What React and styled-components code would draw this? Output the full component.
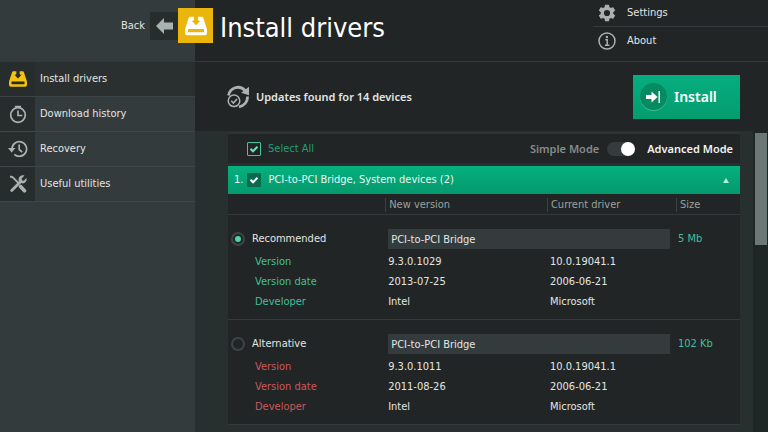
import React, { useState } from "react";
import styled, { createGlobalStyle, css } from "styled-components";

const c = {
  dark: "#212525",
  side: "#333b3d",
  cell: "#272c2c",
  active: "#2a3030",
  body: "#28302f",
  track: "#1f2626",
  line: "#323a3b",
  icon: "#aab2b0",
  text: "#e3e5e4",
  muted: "#9ba19f",
  mint: "#45bf98",
  red: "#c9595c",
  yellow: "#eab60c",
};

const ui = `"DejaVu Sans Condensed", "Noto Sans", sans-serif`;
const strong = `"Noto Sans", "Open Sans", sans-serif`;

const GlobalStyle = createGlobalStyle`
  *, *::before, *::after { box-sizing: border-box; }
  body {
    margin: 0;
    background: ${c.body};
    color: ${c.text};
    font-family: ${ui};
    font-size: 11px;
    line-height: 16px;
  }
  h1, ul, p { margin: 0; padding: 0; }
  ul { list-style: none; }
  a { color: inherit; text-decoration: none; }
  svg { display: block; flex: none; }
`;

const Page = styled.div`
  --side: 195px;
  display: flex;
  flex-direction: column;
  min-height: 100vh;
`;

const Header = styled.header`
  display: flex;
  height: 62px;
  border-bottom: 1px solid ${c.line};
  background: linear-gradient(to right, ${c.side} var(--side), ${c.dark} var(--side));
`;

const BackLink = styled.a`
  display: flex;
  justify-content: flex-end;
  align-items: center;
  gap: 5px;
  width: 178px;
  height: 52px;
`;

const ArrowBox = styled.span`
  display: grid;
  place-items: center;
  width: 28px;
  height: 28px;
  background: ${c.cell};
  color: ${c.icon};
`;

const Brand = styled.div`
  display: flex;
  align-items: center;
  gap: 7px;
  height: 51px;
`;

const LogoTile = styled.span`
  display: grid;
  place-items: center;
  width: 35px;
  height: 35px;
  background: ${c.yellow};
  color: #fff;
`;

const Title = styled.h1`
  padding-top: 4px;
  font-size: 27px;
  font-weight: 400;
  line-height: 36px;
  color: #fff;
  white-space: nowrap;
`;

const TopLinks = styled.ul`
  margin-left: auto;
  width: 175px;
`;

const TopItem = styled.li`
  & + & { padding-top: 1px; border-top: 1px solid ${c.line}; }
`;

const TopLink = styled.a`
  display: flex;
  align-items: center;
  gap: 10px;
  height: 26px;
  padding-left: 4px;
  svg { color: ${c.icon}; }
`;

const Columns = styled.div`
  display: flex;
  flex: 1;
`;

const Sidebar = styled.nav`
  flex: none;
  width: var(--side);
  background: ${c.side};
`;

const NavLink = styled.a`
  display: flex;
  align-items: center;
  height: 35px;
  border-bottom: 1px solid ${(p) => (p.$active ? "#3a4345" : "#3d4648")};
  background: ${(p) => (p.$active ? c.active : "transparent")};
`;

const NavIcon = styled.span`
  display: grid;
  place-items: center;
  width: 35px;
  height: 100%;
  margin-right: 5px;
  background: ${c.cell};
  color: ${(p) => (p.$active ? "#f5c211" : c.icon)};
`;

const Main = styled.main`
  display: flex;
  flex-direction: column;
  flex: 1;
  min-width: 0;
`;

const UpdateBar = styled.section`
  display: flex;
  align-items: center;
  gap: 7px;
  height: 69px;
  padding: 0 28px 0 32px;
  background: ${c.dark};
  color: ${c.icon};
`;

const UpdateText = styled.p`
  flex: 1;
  font: 600 11px/16px ${strong};
  color: ${c.text};
`;

const InstallButton = styled.button`
  display: flex;
  align-items: center;
  gap: 7px;
  width: 107px;
  height: 44px;
  padding: 0 7px;
  border: 0;
  background: linear-gradient(#06ae7f, #049c6f);
  color: #fff;
  font: 600 14px/20px ${strong};
`;

const InstallDisc = styled.span`
  display: grid;
  place-items: center;
  width: 27px;
  height: 27px;
  border-radius: 50%;
  background: #078a62;
  box-shadow: 0 1px 0 #3fbd93;
`;

const ListArea = styled.div`
  display: flex;
  flex: 1;
`;

const Panel = styled.section`
  flex: 1;
  min-width: 0;
  margin: 1px 13px 7px 33px;
  border-top: 2px solid #2c3434;
`;

const Track = styled.div`
  flex: none;
  width: 15px;
  padding: 2px 1px 0 2px;
  background: ${c.track};
`;

const Thumb = styled.div`
  height: 112px;
  background: #6b7875;
`;

const SelectBar = styled.div`
  display: flex;
  align-items: center;
  height: 29px;
  padding: 0 7px 0 19px;
  background: ${c.dark};
  color: #219f79;
`;

const Tick = styled.label`
  display: flex;
  align-items: center;
  gap: 7px;
`;

const TickBox = styled.span`
  display: inline-grid;
  place-items: center;
  & > * { grid-area: 1 / 1; }
  svg { color: ${(p) => (p.$outlined ? "#6fe0bb" : "#fff")}; pointer-events: none; }
  input:not(:checked) + svg { visibility: hidden; }
`;

const TickInput = styled.input`
  appearance: none;
  width: 14px;
  height: 14px;
  margin: 0;
  border-radius: 1px;
  ${(p) =>
    p.$outlined
      ? css`border: 1px solid #3cc79b; background: transparent;`
      : css`border: 0; background: #0a6a4d;`}
`;

const Mode = styled.label`
  display: flex;
  align-items: center;
  gap: 8px;
  margin-left: auto;
  font: 600 11px/16px ${strong};
  color: #868c8b;
`;

const ModeOn = styled.span`
  margin-left: 4px;
  color: #f2f3f2;
`;

const ModeSwitch = styled.input`
  appearance: none;
  display: flex;
  justify-content: flex-start;
  width: 28px;
  height: 14px;
  margin: 0;
  border-radius: 7px;
  background: #343c3e;
  &::before {
    content: "";
    width: 14px;
    height: 14px;
    border-radius: 50%;
    background: #fff;
  }
  &:checked { justify-content: flex-end; }
`;

const GroupBar = styled.div`
  display: flex;
  align-items: center;
  gap: 4px;
  height: 28px;
  margin-top: 3px;
  padding-left: 6px;
  background: linear-gradient(#06b07f, #04996d);
  color: #e8f8f2;
`;

const Collapse = styled.button`
  display: grid;
  place-items: center;
  width: 28px;
  height: 28px;
  margin-left: auto;
  padding: 0;
  border: 0;
  background: none;
  color: #b9ecd9;
`;

const DriverTable = styled.table`
  width: 100%;
  table-layout: fixed;
  border-collapse: separate;
  border-spacing: 0;
  background: ${c.dark};
`;

const Col = styled.col`
  width: ${(p) => p.$w}%;
`;

const HeadCell = styled.th`
  height: 21px;
  padding: 2px 0 0;
  border-bottom: 1px solid ${c.line};
  text-align: left;
  font-weight: 400;
  color: ${c.muted};
`;

const HeadLabel = styled.span`
  display: block;
  height: 14px;
  padding-left: 3px;
  border-left: 1px solid #3a4142;
  line-height: 14px;
`;

const DriverGroup = styled.tbody`
  tr:first-child > * { padding-top: 14px; padding-bottom: 3px; height: 37px; }
  tr:last-child > * { border-bottom: 1px solid ${c.line}; padding-bottom: 7px; height: 28px; }
`;

const Cell = styled.td`
  height: 20px;
  padding: 0 0 0 3px;
  white-space: nowrap;
  color: ${c.text};
`;

const SizeCell = styled(Cell)`
  padding-left: 2px;
  color: ${c.mint};
`;

const PropCell = styled.th`
  height: 20px;
  padding: 0 0 0 27px;
  text-align: left;
  font-weight: 400;
  color: ${(p) => (p.$tone === "good" ? c.mint : c.red)};
`;

const Choice = styled.label`
  display: flex;
  align-items: center;
  gap: 7px;
`;

const Radio = styled.input`
  appearance: none;
  display: grid;
  place-items: center;
  width: 14px;
  height: 14px;
  margin: 0;
  border: 2px solid #3c4546;
  border-radius: 50%;
  &:checked::before {
    content: "";
    width: 6px;
    height: 6px;
    border-radius: 50%;
    background: #4ad6a5;
  }
`;

const NameBox = styled.input`
  display: block;
  width: calc(100% - 6px);
  height: 20px;
  padding: 0 3px;
  border: 0;
  background: #333b3d;
  color: ${c.text};
  font: inherit;
`;

const DriveIcon = ({ size }) => (
  <svg width={size} height={size} viewBox="0 0 66 62" fill="currentColor" fillRule="evenodd">
    <path d="M16 3h11v9q0 3-3 3h-4l13 14 13-14h-4q-3 0-3-3V3h11q4 0 5 4l9 28q2 4 2 8v9q0 7-7 7H7q-7 0-7-7v-9q0-4 2-8L11 7q1-4 5-4zM11 40q-2 0-2 2v6q0 2 2 2h44q2 0 2-2v-6q0-2-2-2z" />
  </svg>
);

const ArrowLeftIcon = () => (
  <svg width="17" height="16" viewBox="0 0 17 16" fill="currentColor">
    <path d="M0 8 8 0v4.500h9v7H8V16z" />
  </svg>
);

const StopwatchIcon = () => (
  <svg width="18" height="19" viewBox="0 0 18 19" fill="none" stroke="currentColor" strokeWidth="1.700">
    <circle cx="9" cy="10" r="7.300" />
    <path d="M6 1.500h6M9 5.500v5h4.300" />
  </svg>
);

const RecoveryIcon = () => (
  <svg width="20" height="18" viewBox="0 0 20 18" fill="none" stroke="currentColor" strokeWidth="1.700">
    <path d="M4 9a7.300 7.300 0 1 1 2.300 5.300M11.200 4.500v5l3 2.700" />
    <path d="M0 8h7.500l-3.800 4.500z" fill="currentColor" stroke="none" />
  </svg>
);

const ToolsIcon = () => (
  <svg width="18" height="18" viewBox="0 0 18 18" fill="none" stroke="currentColor">
    <path d="M1 1.500 3.500 2l6 6" strokeWidth="1.800" />
    <path d="m11.500 11.500 4 4.300" strokeWidth="3.600" strokeLinecap="round" />
    <path d="m2.700 15.500 9-9" strokeWidth="2.800" strokeLinecap="round" />
    <path d="M15.500.6 12.600 3.500l.4 1.900 1.800.3 2.700-2.800c1 3-1.300 6.300-5 5.400L9.600 5.600C9 2 12.200-.4 15.500.6z" fill="currentColor" stroke="none" />
  </svg>
);

const GearIcon = () => (
  <svg width="20" height="20" viewBox="0 0 24 24" fill="currentColor">
    <path d="M19.430 12.980c.04-.32.07-.64.07-.98s-.03-.66-.07-.98l2.110-1.650c.19-.15.24-.42.12-.64l-2-3.460c-.12-.22-.39-.3-.61-.22l-2.490 1c-.52-.4-1.080-.73-1.690-.98l-.38-2.650A.49.49 0 0 0 14 2h-4c-.25 0-.46.18-.49.42l-.38 2.650c-.61.25-1.170.59-1.690.98l-2.490-1c-.23-.09-.49 0-.61.22l-2 3.460c-.13.22-.07.49.12.64l2.110 1.650c-.04.32-.07.65-.07.98s.03.66.07.98l-2.110 1.650c-.19.15-.24.42-.12.64l2 3.460c.12.22.39.3.61.22l2.490-1c.52.4 1.080.73 1.690.98l.38 2.650c.03.24.24.42.49.42h4c.25 0 .46-.18.49-.42l.38-2.650c.61-.25 1.170-.59 1.690-.98l2.490 1c.23.09.49 0 .61-.22l2-3.460c.12-.22.07-.49-.12-.64zM12 15.700a3.700 3.700 0 1 1 0-7.400 3.700 3.700 0 0 1 0 7.400z" />
  </svg>
);

const InfoIcon = () => (
  <svg width="20" height="20" viewBox="0 0 20 20" fill="none" stroke="currentColor">
    <circle cx="10" cy="10" r="8" strokeWidth="1.500" />
    <path d="M8.300 8.800h1.900v5.400M8 14.200h4.400" strokeWidth="1.500" />
    <circle cx="9.900" cy="6" r="1.200" fill="currentColor" stroke="none" />
  </svg>
);

const UpdateIcon = () => (
  <svg width="22" height="24" viewBox="0 0 22 24" fill="none" stroke="currentColor">
    <path d="M1.500 10.500C3 2.500 12.500-.5 18 5.500" strokeWidth="2.800" />
    <path d="M22 1.800v8.400l-7.800-2.400z" fill="currentColor" stroke="none" />
    <path d="M20.600 11.500c0 5.500-3.600 9.600-8.600 10.300" strokeWidth="2.800" />
    <circle cx="7" cy="15.800" r="5.800" strokeWidth="1.500" />
    <path d="m4.200 15.800 2.200 2.200 3.600-4" strokeWidth="1.600" />
  </svg>
);

const InstallIcon = () => (
  <svg width="15" height="12" viewBox="0 0 15 12" fill="currentColor">
    <path d="M0 4h5.500V.5L11.500 6l-6 5.500V8H0z" />
    <path d="M12.500 0H14v12h-1.500z" />
  </svg>
);

const CheckIcon = () => (
  <svg width="10" height="10" viewBox="0 0 10 10" fill="none" stroke="currentColor" strokeWidth="2">
    <path d="m1.500 4.700 2.500 2.600 4.500-4.600" />
  </svg>
);

const UpIcon = () => (
  <svg width="6" height="5" viewBox="0 0 6 5" fill="currentColor">
    <path d="M3 0 6 5H0z" />
  </svg>
);

const navItems = [
  { label: "Install drivers", icon: <DriveIcon size={18} />, active: true },
  { label: "Download history", icon: <StopwatchIcon /> },
  { label: "Recovery", icon: <RecoveryIcon /> },
  { label: "Useful utilities", icon: <ToolsIcon /> },
];

const drivers = [
  {
    kind: "Recommended",
    tone: "good",
    size: "5 Mb",
    rows: [
      ["Version", "9.3.0.1029", "10.0.19041.1"],
      ["Version date", "2013-07-25", "2006-06-21"],
      ["Developer", "Intel", "Microsoft"],
    ],
  },
  {
    kind: "Alternative",
    tone: "bad",
    size: "102 Kb",
    rows: [
      ["Version", "9.3.0.1011", "10.0.19041.1"],
      ["Version date", "2011-08-26", "2006-06-21"],
      ["Developer", "Intel", "Microsoft"],
    ],
  },
];

function CheckBox({ outlined, ...rest }) {
  return (
    <TickBox $outlined={outlined}>
      <TickInput type="checkbox" defaultChecked $outlined={outlined} {...rest} />
      <CheckIcon />
    </TickBox>
  );
}

export default function App() {
  const [chosen, setChosen] = useState("Recommended");
  return (
    <Page>
      <GlobalStyle />
      <Header>
        <BackLink href="#back">
          Back
          <ArrowBox><ArrowLeftIcon /></ArrowBox>
        </BackLink>
        <Brand>
          <LogoTile><DriveIcon size={22} /></LogoTile>
          <Title>Install drivers</Title>
        </Brand>
        <TopLinks>
          <TopItem><TopLink href="#settings"><GearIcon />Settings</TopLink></TopItem>
          <TopItem><TopLink href="#about"><InfoIcon />About</TopLink></TopItem>
        </TopLinks>
      </Header>
      <Columns>
        <Sidebar>
          {navItems.map((n) => (
            <NavLink key={n.label} href="#" $active={n.active} aria-current={n.active ? "page" : undefined}>
              <NavIcon $active={n.active}>{n.icon}</NavIcon>
              {n.label}
            </NavLink>
          ))}
        </Sidebar>
        <Main>
          <UpdateBar>
            <UpdateIcon />
            <UpdateText>Updates found for 14 devices</UpdateText>
            <InstallButton type="button">
              <InstallDisc><InstallIcon /></InstallDisc>
              Install
            </InstallButton>
          </UpdateBar>
          <ListArea>
            <Panel>
              <SelectBar>
                <Tick><CheckBox outlined />Select All</Tick>
                <Mode>
                  Simple Mode
                  <ModeSwitch type="checkbox" role="switch" defaultChecked />
                  <ModeOn>Advanced Mode</ModeOn>
                </Mode>
              </SelectBar>
              <GroupBar>
                <span>1.</span>
                <Tick><CheckBox />PCI-to-PCI Bridge, System devices (2)</Tick>
                <Collapse type="button" aria-label="Collapse"><UpIcon /></Collapse>
              </GroupBar>
              <DriverTable>
                <colgroup>
                  <Col $w={30.7} />
                  <Col $w={31.6} />
                  <Col $w={25.2} />
                  <Col $w={12.5} />
                </colgroup>
                <thead>
                  <tr>
                    <HeadCell aria-label="Property" />
                    <HeadCell><HeadLabel>New version</HeadLabel></HeadCell>
                    <HeadCell><HeadLabel>Current driver</HeadLabel></HeadCell>
                    <HeadCell><HeadLabel>Size</HeadLabel></HeadCell>
                  </tr>
                </thead>
                {drivers.map((d) => (
                  <DriverGroup key={d.kind}>
                    <tr>
                      <Cell>
                        <Choice>
                          <Radio
                            type="radio"
                            name="driver"
                            checked={chosen === d.kind}
                            onChange={() => setChosen(d.kind)}
                          />
                          {d.kind}
                        </Choice>
                      </Cell>
                      <Cell colSpan={2}>
                        <NameBox readOnly value="PCI-to-PCI Bridge" aria-label={`${d.kind} driver name`} />
                      </Cell>
                      <SizeCell>{d.size}</SizeCell>
                    </tr>
                    {d.rows.map(([label, next, current]) => (
                      <tr key={label}>
                        <PropCell scope="row" $tone={d.tone}>{label}</PropCell>
                        <Cell>{next}</Cell>
                        <Cell>{current}</Cell>
                        <Cell />
                      </tr>
                    ))}
                  </DriverGroup>
                ))}
              </DriverTable>
            </Panel>
            <Track><Thumb /></Track>
          </ListArea>
        </Main>
      </Columns>
    </Page>
  );
}
